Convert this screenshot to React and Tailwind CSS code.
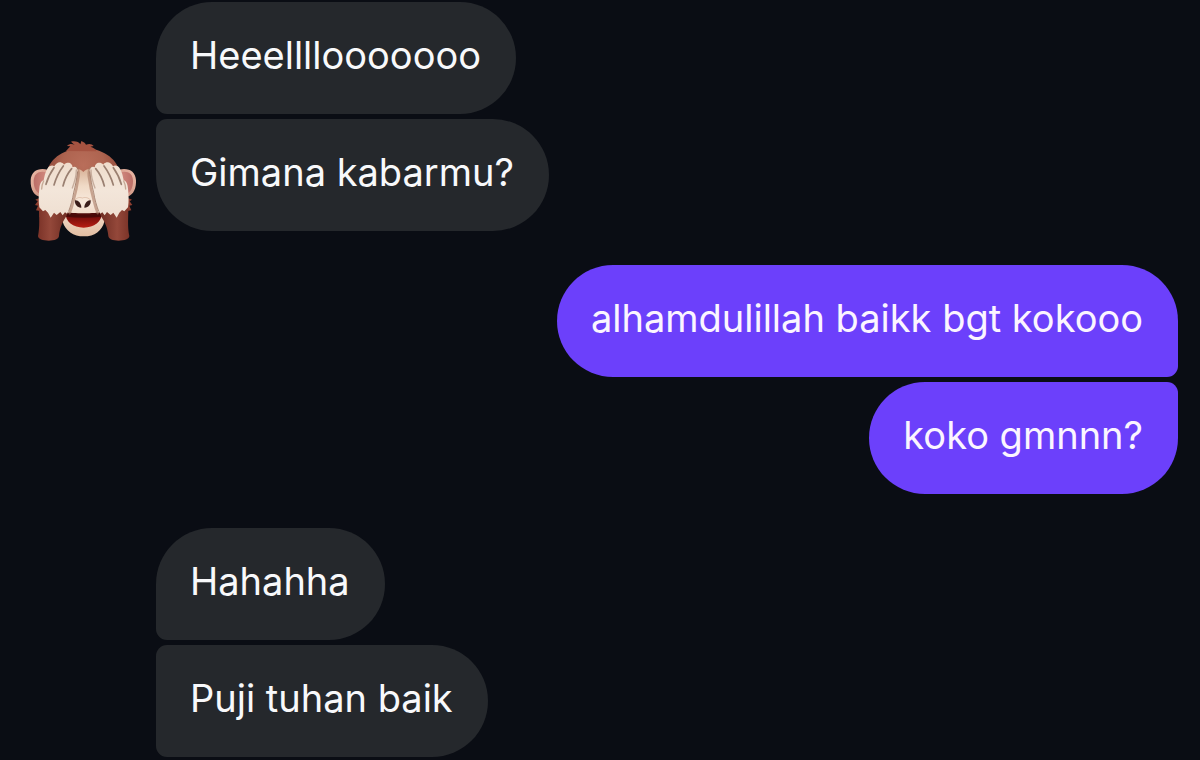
import React from 'react';
import clsx from 'clsx';

const groups = [
  { from: 'them', avatar: true, messages: ['Heeellllooooooo', 'Gimana kabarmu?'] },
  { from: 'me', messages: ['alhamdulillah baikk bgt kokooo', 'koko gmnnn?'] },
  { from: 'them', messages: ['Hahahha', 'Puji tuhan baik'], open: true },
];

// one half of the face: fur, sleeve and the hand over the eye
const Arm = () => (
  <>
    <path d="M66 204C58 205 52 205 46 209l7 5-8 11 9 2-6 14 12 2-2 18 18-4z" fill="#8f3f30" />
    <path d="M57 238C57 262 60 290 54 318c0 9 15 14 32 14 18 0 30-5 31-14 2-22 8-36 15-48 6-9 11-18 13-26z" fill="url(#sleeve)" />
    {/* shadow the hand casts on the face */}
    <path d="M168 112C177 118 177 126 176 138C173 160 167 190 161 212C157 228 153 240 149 250" fill="none" stroke="#a97a64" strokeWidth="7" strokeLinecap="round" opacity=".6" />
    <path
      d="M58 176C59 162 64 152 71 151C73 139 76 126 82 116C87 107 97 104 103 109C107 100 117 94 125 98C129 99 131 101 132 104C139 97 149 97 154 103C157 106 158 108 157 112C165 107 173 113 173 124C170 146 166 168 161 188C158 208 152 228 145 244L141 251L135 247L128 256L121 246L110 255L102 248L92 263L84 248L76 240L69 244L58 232C55 214 56 194 58 176z"
      fill="url(#hand)"
    />
    <g fill="none" stroke="#7d5f50" strokeWidth="5" strokeLinecap="round" opacity=".75">
      <path d="M102 113C92 127 83 144 78 163" />
      <path d="M130 108C118 124 108 144 102 165" />
      <path d="M155 116C143 130 134 148 129 168" />
    </g>
    <path d="M169 120C169 138 163 158 157 174" fill="none" stroke="#b39584" strokeWidth="4" strokeLinecap="round" opacity=".7" />
    <path d="M173 124C170 148 166 168 161 188C158 208 152 228 146 244" fill="none" stroke="#8b6250" strokeWidth="3" opacity=".7" />
    <path d="M71 153C67 161 65 168 65 177" fill="none" stroke="#c5a995" strokeWidth="4" strokeLinecap="round" />
  </>
);

const Ear = () => (
  <>
    <path d="M83 119C56 112 33 123 32 151c-1 28 10 49 33 50l22-34z" fill="url(#earRim)" />
    <path d="M79 127C57 121 42 131 41 152c0 22 9 40 25 40l16-32z" fill="url(#earInner)" />
  </>
);

const MonkeyAvatar = () => (
  <svg role="img" aria-label="See-no-evil monkey" viewBox="30 30 318 306" className="w-[106px] h-[102px] shrink-0">
    <defs>
      <radialGradient id="head" gradientUnits="userSpaceOnUse" cx="190" cy="105" r="125">
        <stop offset="0" stopColor="#b96e5a" />
        <stop offset=".5" stopColor="#ae6450" />
        <stop offset="1" stopColor="#8a4334" />
      </radialGradient>
      <linearGradient id="face" x1="0" y1="0" x2="0" y2="1">
        <stop offset="0" stopColor="#d9b399" />
        <stop offset=".25" stopColor="#f0dac6" />
        <stop offset=".5" stopColor="#f8e9dc" />
        <stop offset="1" stopColor="#e2bda2" />
      </linearGradient>
      <linearGradient id="hand" x1="0" y1="0" x2="0" y2="1">
        <stop offset="0" stopColor="#efdccb" />
        <stop offset=".5" stopColor="#f3e6da" />
        <stop offset="1" stopColor="#efdfd1" />
      </linearGradient>
      <linearGradient id="sleeve" x1="0" y1="0" x2="1" y2="0">
        <stop offset="0" stopColor="#7b3328" />
        <stop offset=".4" stopColor="#94483a" />
        <stop offset="1" stopColor="#6d2b21" />
      </linearGradient>
      <linearGradient id="earRim" x1="0" y1="0" x2="1" y2="1">
        <stop offset="0" stopColor="#edbba9" />
        <stop offset="1" stopColor="#c48775" />
      </linearGradient>
      <linearGradient id="earInner" x1="0" y1="0" x2="1" y2="0">
        <stop offset="0" stopColor="#bb6e67" />
        <stop offset="1" stopColor="#d38b80" />
      </linearGradient>
      <linearGradient id="mouth" x1="0" y1="0" x2="0" y2="1">
        <stop offset="0" stopColor="#3f0908" />
        <stop offset=".35" stopColor="#7a0e0b" />
        <stop offset="1" stopColor="#b81d14" />
      </linearGradient>
    </defs>

    <Ear />
    <g transform="matrix(-1 0 0 1 380 0)">
      <Ear />
    </g>

    {/* head and tuft */}
    <path
      d="M190 54C244 54 290 84 299 125C308 165 304 225 270 270H110C76 225 72 165 81 125C90 84 136 54 190 54z"
      fill="url(#head)"
    />
    <path d="M138 63L151 49L141 48C149 40 158 42 164 45L153 35C166 32 177 36 181 43L184 33C193 37 196 40 198 44C207 40 216 41 221 48L211 50C220 52 227 57 230 64z" fill="#a65341" />

    {/* muzzle */}
    <path
      d="M190 126C184 119 174 115 165 118L145 170L128 275C136 302 160 319 192 319C224 319 246 302 253 275L232 170L215 118C206 115 196 119 190 126z"
      fill="url(#face)"
    />
    <path d="M164 212C170 202 179 201 187 204C195 201 206 202 213 212" fill="none" stroke="#d7b39d" strokeWidth="3" opacity=".7" />
    <path d="M165 211C173 209 184 219 184 233C174 234 163 225 165 211z" fill="#3b1d1a" />
    <path d="M212 211C204 209 193 219 193 233C203 234 214 225 212 211z" fill="#3b1d1a" />
    <path d="M137 247C155 251 227 251 246 247C247 275 222 293 191 293C160 293 134 275 137 247z" fill="url(#mouth)" />
    <path d="M138 250C170 256 213 256 245 250L244 260C207 264 172 264 139 260z" fill="#3c0706" opacity=".7" />

    <Arm />
    <g transform="matrix(-1 0 0 1 382 0)">
      <Arm />
    </g>
  </svg>
);

const Bubble = ({ text, mine, first, last }) => (
  <p
    className={clsx(
      'pl-[34px] pr-[35px] pt-[29px] pb-[35px] text-[38px] leading-[48px] rounded-[56px]',
      mine ? 'bg-[#6c40fb] text-[#fbf5ff]' : 'bg-[#25282c] text-[#f8f9fb]',
      mine && !last && 'rounded-br-[11px]',
      mine && !first && 'rounded-tr-[11px]',
      !mine && !last && 'rounded-bl-[11px]',
      !mine && !first && 'rounded-tl-[11px]',
    )}
  >
    {text}
  </p>
);

const MessageGroup = ({ from, messages, avatar, open }) => {
  const mine = from === 'me';

  return (
    <div className={clsx('flex items-end gap-5', mine && 'justify-end')}>
      {!mine && (avatar ? <MonkeyAvatar /> : <div className="w-[106px] shrink-0" />)}
      <div className={clsx('flex flex-col gap-[5px] pb-[11px]', mine ? 'items-end' : 'items-start')}>
        {messages.map((text, i) => (
          <Bubble
            key={text}
            text={text}
            mine={mine}
            first={i === 0}
            last={i === messages.length - 1 && !open}
          />
        ))}
      </div>
    </div>
  );
};

export default function App() {
  return (
    <main className="min-h-screen bg-[#0a0d14] pt-[2px] pl-[30px] pr-[22px] font-['Inter',sans-serif]">
      <div className="flex flex-col gap-[23px]">
        {groups.map((group, i) => (
          <MessageGroup key={i} {...group} />
        ))}
      </div>
    </main>
  );
}
